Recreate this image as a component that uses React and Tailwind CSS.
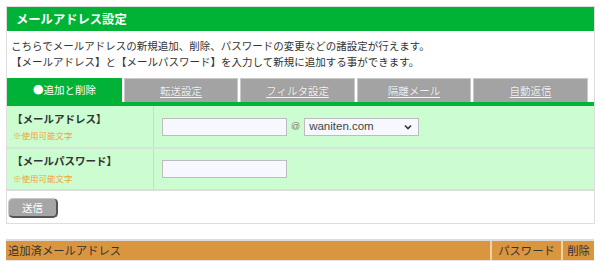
import React from "react";

const font = { fontFamily: '"Noto Sans CJK JP", "Noto Sans", sans-serif' };

function Tab({ label, active, w }) {
  if (active) {
    return (
      <div className={`${w} h-[24px] bg-[#00b336] text-white text-[10.5px] flex items-center justify-center`}>
        ●追加と削除
      </div>
    );
  }
  return (
    <div className={`${w} h-[24px] bg-[#a3a3a3] border-x border-t border-[#c9c9c9] text-[#f4f4f4] text-[10.5px] flex items-center justify-center`}>
      <span className="underline underline-offset-2 [text-shadow:0_0_1px_#777]">{label}</span>
    </div>
  );
}

export default function App() {
  return (
    <div className="w-[600px] h-[264px] bg-white overflow-hidden pt-[6px] pl-[6px] text-[#333]" style={font}>
      <div className="w-[589px] border border-[#dedede]">
        <div className="h-[24px] bg-[#00b336] text-white font-bold text-[12.3px] flex items-center pl-[9px]">
          メールアドレス設定
        </div>
        <div className="pt-[7px] pl-[4px] text-[10.5px] leading-[16px] text-[#333]">
          <p>こちらでメールアドレスの新規追加、削除、パスワードの変更などの諸設定が行えます。</p>
          <p>【メールアドレス】と【メールパスワード】を入力して新規に追加する事ができます。</p>
        </div>
        <div className="mt-[8px] flex gap-[2px]">
          <Tab active w="w-[115px]" />
          <Tab label="転送設定" w="w-[114px]" />
          <Tab label="フィルタ設定" w="w-[115px]" />
          <Tab label="隔離メール" w="w-[114px]" />
          <Tab label="自動返信" w="w-[115px]" />
        </div>
        <div className="h-[4px] bg-[#00b336]" />
        <div className="bg-[#ccfdd1]">
          <div className="flex h-[43px] border-b-2 border-[#d6e6d6]">
            <div className="w-[147px] border-r border-[#c9dcc9] pl-[5px] pt-[5px]">
              <div className="text-[10.5px] font-bold leading-[16px]">【メールアドレス】</div>
              <div className="text-[8.5px] text-[#f3a03a] leading-[12px] mt-[2px] pl-[1px]">※使用可能文字</div>
            </div>
            <div className="flex items-center pl-[8px] pt-[1px]">
              <div className="w-[125px] h-[18px] bg-[#f7f7ff] border border-[#bdbdbd]" />
              <span className="mx-[4px] text-[9px] text-[#777]" style={{ fontFamily: '"Liberation Sans", sans-serif' }}>@</span>
              <div className="w-[115px] h-[18px] bg-[#f7f7ff] border border-[#bdbdbd] flex items-center justify-between pl-[4px] pr-[6px]">
                <span className="text-[11.5px] text-[#444]" style={{ fontFamily: '"Liberation Sans", sans-serif' }}>waniten.com</span>
                <svg width="8" height="6" viewBox="0 0 8 6">
                  <path d="M1 1.5 L4 4.5 L7 1.5" stroke="#333" strokeWidth="1.6" fill="none" />
                </svg>
              </div>
            </div>
          </div>
          <div className="flex h-[42px] border-b-2 border-[#dcdcdc]">
            <div className="w-[147px] border-r border-[#c9dcc9] pl-[5px] pt-[4px]">
              <div className="text-[10.5px] font-bold leading-[16px]">【メールパスワード】</div>
              <div className="text-[8.5px] text-[#f3a03a] leading-[12px] mt-[3px] pl-[1px]">※使用可能文字</div>
            </div>
            <div className="flex items-center pl-[8px] pb-[1px]">
              <div className="w-[125px] h-[18px] bg-[#f7f7ff] border border-[#bdbdbd]" />
            </div>
          </div>
        </div>
        <div className="h-[32px] pl-[1px] pt-[7px]">
          <div className="w-[50px] h-[20px] rounded-[5px] bg-[#a6a6a6] border border-[#c8c8c8] border-r-2 border-b-2 border-r-[#555] border-b-[#555] text-white text-[10.5px] flex items-center justify-center">
            送信
          </div>
        </div>
      </div>
      <div className="mt-[15px] w-[588px] border-t-2 border-[#dcdcdc]">
        <div className="flex h-[19px] bg-[#da963f] text-[11.3px] text-[#333] leading-[19px]">
          <div className="flex-1 pl-[2px]">追加済メールアドレス</div>
          <div className="w-[71px] border-l-2 border-[#efd2a8] text-center">パスワード</div>
          <div className="w-[33px] border-l-2 border-[#efd2a8] text-center">削除</div>
        </div>
        <div className="h-[10px] border-t border-[#e5e5e5]" />
      </div>
    </div>
  );
}
